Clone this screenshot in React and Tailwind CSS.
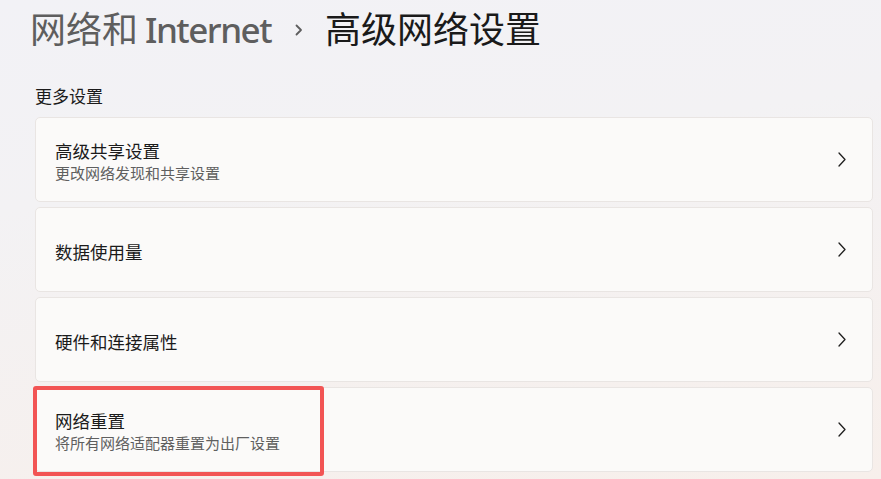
import React from "react";

const Chevron = () => (
  <svg width="8" height="15" viewBox="0 0 8 15" fill="none">
    <path d="M1 1 L7 7.5 L1 14" stroke="#1f1f1f" strokeWidth="1.3" strokeLinecap="round" strokeLinejoin="round" />
  </svg>
);

const Card = ({ title, sub, children }) => (
  <div className="relative h-[85px] rounded-[5px] border border-[#e9e5e3] bg-[#fbfaf9] flex items-center pl-[19px] pr-[26px]">
    <div className="flex-1 flex flex-col pt-[4px]">
      <div className="text-[17.5px] leading-[22px] text-[#1b1b1b]">{title}</div>
      {sub && <div className="text-[15px] leading-[20px] text-[#5f5f5f] mt-[1px]">{sub}</div>}
    </div>
    <Chevron />
    {children}
  </div>
);

export default function App() {
  return (
    <div
      className="w-[881px] h-[479px] overflow-hidden bg-[linear-gradient(172deg,#f2f2f6_0%,#f3f2f4_35%,#f7efeb_100%)]"
      style={{ fontFamily: '"Noto Sans", "Noto Sans CJK SC", sans-serif' }}
    >
      <div className="flex items-center pl-[30px] pt-[8px] h-[52px]">
        <span className="text-[36px] leading-[44px] text-[#5e5e5e] font-normal">网络和</span>
        <span className="text-[35px] leading-[44px] text-[#5e5e5e] font-medium tracking-[-1.5px] ml-[7px]">Internet</span>
        <span className="ml-[24px] mr-[22px] flex items-center">
          <svg width="8" height="12" viewBox="0 0 8 12" fill="none">
            <path d="M1.5 1.5 L6 6 L1.5 10.5" stroke="#5e5e5e" strokeWidth="1.8" strokeLinecap="round" strokeLinejoin="round" />
          </svg>
        </span>
        <span className="text-[36px] leading-[44px] text-[#1a1a1a] font-normal">高级网络设置</span>
      </div>
      <div className="pl-[35px] pr-[8px] mt-[33px]">
        <div className="text-[17px] leading-[24px] text-[#1b1b1b] mb-[8px]">更多设置</div>
        <div className="flex flex-col gap-[5px]">
          <Card title="高级共享设置" sub="更改网络发现和共享设置" />
          <Card title="数据使用量" />
          <Card title="硬件和连接属性" />
          <Card title="网络重置" sub="将所有网络适配器重置为出厂设置">
            <div className="absolute -left-[3px] -top-[2px] w-[291px] h-[90px] border-4 border-[#f25454] rounded-[3px] pointer-events-none" />
          </Card>
        </div>
      </div>
    </div>
  );
}
